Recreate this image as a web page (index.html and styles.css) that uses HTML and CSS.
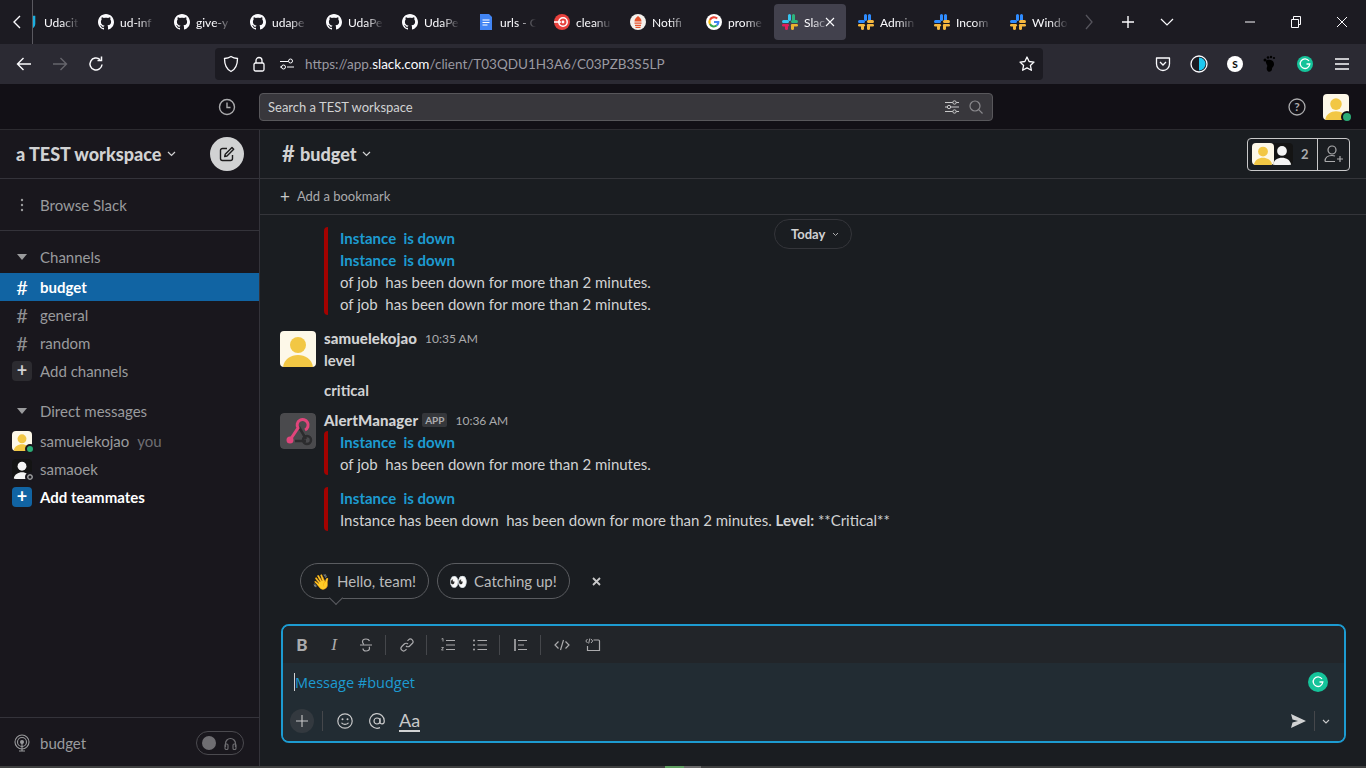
FILE: index.html
```html
<!DOCTYPE html>
<html>
<head>
  <title>Slack | budget | a TEST workspace</title>
  <link rel="stylesheet" href="styles.css">
</head>
<body>
  <svg class="defs" width="0" height="0">
    <defs>
      <symbol id="github" viewBox="0 0 16 16"><path fill="#fbfbfe" d="M8 0C3.6 0 0 3.6 0 8c0 3.5 2.3 6.5 5.5 7.6.4.1.5-.2.5-.4v-1.4c-2.2.5-2.7-1-2.7-1-.4-.9-.9-1.2-.9-1.2-.7-.5.1-.5.1-.5.8.1 1.2.8 1.2.8.7 1.2 1.9.9 2.3.7.1-.5.3-.9.5-1.1-1.8-.2-3.6-.9-3.6-4 0-.9.3-1.6.8-2.1-.1-.2-.4-1 .1-2.1 0 0 .7-.2 2.2.8.6-.2 1.3-.3 2-.3s1.4.1 2 .3c1.5-1 2.2-.8 2.2-.8.4 1.1.2 1.9.1 2.1.5.6.8 1.3.8 2.1 0 3.1-1.9 3.7-3.7 3.9.3.3.6.8.6 1.5v2.2c0 .2.1.5.6.4C13.7 14.5 16 11.5 16 8c0-4.4-3.6-8-8-8z"/></symbol>
      <symbol id="slack" viewBox="0 0 16 16">
        <rect x="6" y="0" width="3" height="7" rx="1.5" fill="#2f8cff"/>
        <rect x="0" y="6" width="7" height="3" rx="1.5" fill="#2f8cff"/>
        <rect x="10" y="0" width="3" height="7" rx="1.5" fill="#2f8cff"/>
        <rect x="9" y="6" width="7" height="3" rx="1.5" fill="#f4b740"/>
        <rect x="3" y="10" width="3" height="6" rx="1.5" fill="#f4b740"/>
        <rect x="0" y="10" width="7" height="2.6" rx="1.3" fill="#f4b740"/>
        <rect x="9" y="10" width="7" height="2.6" rx="1.3" fill="#f4b740"/>
        <rect x="9" y="10" width="3" height="6" rx="1.5" fill="#f4b740"/>
      </symbol>
      <symbol id="person" viewBox="0 0 36 36">
        <rect width="36" height="36" fill="#fdf8e8"/>
        <circle cx="18" cy="14" r="8" fill="#f2c744"/>
        <path d="M3 36c1-8 8-12 15-12s14 4 15 12z" fill="#f2c744"/>
      </symbol>
      <symbol id="ghost" viewBox="0 0 36 36">
        <rect width="36" height="36" fill="#141414"/>
        <circle cx="18" cy="13" r="8" fill="#f4f4f4"/>
        <path d="M3 36c1-8 8-12 15-12s14 4 15 12z" fill="#f4f4f4"/>
      </symbol>
    </defs>
  </svg>

  <header class="tabbar">
    <svg class="tb-back" width="10" height="16" viewBox="0 0 10 16"><path d="M8 2 2 8l6 6" fill="none" stroke="#fbfbfe" stroke-width="1.4"/></svg>
    <div class="tabs">
      <div class="tab tab-first"><svg class="fav" viewBox="0 0 16 16"><path d="M2 3h10v7c0 2-2 4-5 4s-5-2-5-4z" fill="none" stroke="#1cb0e0" stroke-width="2.6"/></svg><span class="tab-title">Udacit</span></div>
      <div class="tab"><svg class="fav"><use href="#github"/></svg><span class="tab-title">ud-inf</span></div>
      <div class="tab"><svg class="fav"><use href="#github"/></svg><span class="tab-title">give-y</span></div>
      <div class="tab"><svg class="fav"><use href="#github"/></svg><span class="tab-title">udape</span></div>
      <div class="tab"><svg class="fav"><use href="#github"/></svg><span class="tab-title">UdaPe</span></div>
      <div class="tab"><svg class="fav"><use href="#github"/></svg><span class="tab-title">UdaPe</span></div>
      <div class="tab"><svg class="fav" viewBox="0 0 16 16"><path d="M2 0h9l3 3v13H2z" fill="#4285f4"/><path d="M4.500 6h7M4.500 8.500h7M4.500 11h5" stroke="#fff" stroke-width="1.200"/></svg><span class="tab-title">urls - G</span></div>
      <div class="tab"><svg class="fav" viewBox="0 0 16 16"><circle cx="8" cy="8" r="8" fill="#e8413d"/><circle cx="9" cy="8" r="4.200" fill="none" stroke="#fff" stroke-width="1.500"/><circle cx="9" cy="8" r="1.400" fill="#fff"/><path d="M0 8h7" stroke="#fff" stroke-width="1.500"/></svg><span class="tab-title">cleanu</span></div>
      <div class="tab"><svg class="fav" viewBox="0 0 16 16"><circle cx="8" cy="8" r="8" fill="#f4f0ec"/><path d="M8 2c2 2 3.500 3 3.500 5.500H4.500C4.500 5 6 4 8 2zM4.500 8.500h7v1.200h-7zM5 10.700h6v1.200H5zM5.500 12.800h5V14h-5z" fill="#e6522c"/></svg><span class="tab-title">Notifi</span></div>
      <div class="tab"><svg class="fav" viewBox="0 0 16 16"><circle cx="8" cy="8" r="8" fill="#fff"/><path d="M8 4.200c1 0 1.800.4 2.400 1l1.500-1.500A5.600 5.600 0 0 0 3 5.300l1.800 1.400A3.400 3.400 0 0 1 8 4.200z" fill="#ea4335"/><path d="M13.400 8.100c0-.4 0-.8-.1-1.100H8v2.100h3a2.600 2.600 0 0 1-1.100 1.700l1.700 1.300c1.100-1 1.800-2.400 1.800-4z" fill="#4285f4"/><path d="M4.800 9.200 3 10.600a5.600 5.600 0 0 0 8.600 1.500l-1.700-1.300a3.400 3.400 0 0 1-5.100-1.600z" fill="#34a853"/><path d="M4.600 8c0-.3 0-.7.200-1L3 5.300a5.600 5.600 0 0 0 0 5.300l1.800-1.400c-.2-.4-.2-.8-.2-1.200z" fill="#fbbc05"/></svg><span class="tab-title">prome</span></div>
      <div class="tab tab-active">
        <svg class="fav" viewBox="0 0 16 16">
          <rect x="6" y="0" width="3" height="7" rx="1.500" fill="#36c5f0"/><rect x="0" y="6" width="7" height="3" rx="1.500" fill="#36c5f0"/>
          <rect x="10" y="0" width="3" height="7" rx="1.500" fill="#2eb67d"/><rect x="9" y="6" width="7" height="3" rx="1.500" fill="#2eb67d"/>
          <rect x="0" y="10" width="7" height="2.600" rx="1.300" fill="#e01e5a"/><rect x="3" y="10" width="3" height="6" rx="1.500" fill="#e01e5a"/>
          <rect x="9" y="10" width="7" height="2.600" rx="1.300" fill="#ecb22e"/><rect x="9" y="10" width="3" height="6" rx="1.500" fill="#ecb22e"/>
        </svg>
        <span class="tab-title tab-title-short">Slac</span>
        <svg class="tab-close" width="10" height="10" viewBox="0 0 10 10"><path d="M1 1l8 8M9 1 1 9" stroke="#fbfbfe" stroke-width="1.100"/></svg>
      </div>
      <div class="tab"><svg class="fav"><use href="#slack"/></svg><span class="tab-title">Admin</span></div>
      <div class="tab"><svg class="fav"><use href="#slack"/></svg><span class="tab-title">Incom</span></div>
      <div class="tab"><svg class="fav"><use href="#slack"/></svg><span class="tab-title">Windo</span></div>
    </div>
    <svg class="tb-more" width="10" height="16" viewBox="0 0 10 16"><path d="M2 1l6 7-6 7" fill="none" stroke="#55545c" stroke-width="1.300"/></svg>
    <svg class="tb-new" width="14" height="14" viewBox="0 0 14 14"><path d="M7 1v12M1 7h12" stroke="#fbfbfe" stroke-width="1.400"/></svg>
    <svg class="tb-list" width="14" height="8" viewBox="0 0 14 8"><path d="M1 1l6 6 6-6" fill="none" stroke="#fbfbfe" stroke-width="1.200"/></svg>
    <div class="win-btns">
      <svg width="10" height="2" viewBox="0 0 10 2"><path d="M0 1h10" stroke="#fbfbfe"/></svg>
      <svg width="10" height="12" viewBox="0 0 10 12"><path d="M.5 3.500h7v8h-7zM2.500 3.500V.5h7v8h-2" fill="none" stroke="#fbfbfe"/></svg>
      <svg width="10" height="10" viewBox="0 0 10 10"><path d="M0 0l10 10M10 0 0 10" stroke="#fbfbfe"/></svg>
    </div>
  </header>

  <nav class="navbar">
    <svg class="nav-btn" width="16" height="14" viewBox="0 0 16 14"><path d="M15 7H2M7.500 1 1.500 7l6 6" fill="none" stroke="#fbfbfe" stroke-width="1.400"/></svg>
    <svg class="nav-btn" width="16" height="14" viewBox="0 0 16 14"><path d="M1 7h13M8.500 1l6 6-6 6" fill="none" stroke="#66656c" stroke-width="1.400"/></svg>
    <svg class="nav-btn" width="16" height="16" viewBox="0 0 16 16"><path d="M14 8.500A6 6 0 1 1 12 3.500M13.500 .5v4h-4" fill="none" stroke="#fbfbfe" stroke-width="1.500"/></svg>
    <div class="urlbar">
      <svg width="16" height="18" viewBox="0 0 16 18"><path d="M8 1.500c2 1.300 4 1.800 6.500 2 0 6-1.500 10.500-6.500 13-5-2.500-6.500-7-6.500-13 2.500-.2 4.500-.7 6.500-2z" fill="none" stroke="#fbfbfe" stroke-width="1.300"/></svg>
      <svg width="12" height="16" viewBox="0 0 12 16"><path d="M3 7V4.500a3 3 0 0 1 6 0V7" fill="none" stroke="#fbfbfe" stroke-width="1.300"/><rect x="1" y="7" width="10" height="8" rx="1.500" fill="none" stroke="#fbfbfe" stroke-width="1.300"/></svg>
      <svg width="14" height="12" viewBox="0 0 14 12"><path d="M0 3.500h8M0 9h2M7 9h7" stroke="#fbfbfe"/><circle cx="10.500" cy="3" r="2" fill="none" stroke="#fbfbfe"/><circle cx="3.500" cy="9" r="2" fill="none" stroke="#fbfbfe"/></svg>
      <span class="url">https://app.<b>slack.com</b>/client/T03QDU1H3A6/C03PZB3S5LP</span>
      <svg class="url-star" width="16" height="16" viewBox="0 0 16 16"><path d="M8 1l2.100 4.500 4.900.6-3.600 3.300 1 4.900L8 11.900l-4.400 2.400 1-4.900L1 6.100l4.900-.6z" fill="none" stroke="#fbfbfe" stroke-width="1.300" stroke-linejoin="round"/></svg>
    </div>
    <div class="ext-icons">
      <svg width="16" height="16" viewBox="0 0 16 16"><path d="M1.500 2h13v6a6.500 6.500 0 0 1-13 0z" fill="none" stroke="#fbfbfe" stroke-width="1.300" stroke-linejoin="round"/><path d="M5 6l3 3 3-3" fill="none" stroke="#fbfbfe" stroke-width="1.300"/></svg>
      <svg width="18" height="18" viewBox="0 0 18 18"><circle cx="9" cy="9" r="8" fill="#1c1b22" stroke="#fbfbfe" stroke-width="1.300"/><path d="M9 2.500a6.500 6.500 0 0 1 0 13z" fill="#1ec8f0"/></svg>
      <span class="ext-s">S</span>
      <svg width="16" height="18" viewBox="0 0 16 18"><path d="M5 5c3-1 7 0 7 4 0 3-2 3-2 5 0 3-4 4-5 1s1-3 0-5-2-4 0-5z" fill="#000"/><circle cx="3" cy="5" r="1.500" fill="#000"/><circle cx="6" cy="2.500" r="1.300" fill="#000"/><circle cx="9" cy="2" r="1.200" fill="#000"/><circle cx="12" cy="3" r="1.100" fill="#000"/></svg>
      <span class="gram gram-sm"><svg width="12" height="12" viewBox="0 0 12 12"><path d="M10 3A4.800 4.800 0 1 0 10.800 6H7.500" fill="none" stroke="#fff" stroke-width="1.300"/></svg></span>
      <svg class="ext-menu" width="14" height="12" viewBox="0 0 14 12"><path d="M0 1h14M0 6h14M0 11h14" stroke="#fbfbfe" stroke-width="1.300"/></svg>
    </div>
  </nav>

  <div class="slack-top">
    <svg class="history" width="18" height="18" viewBox="0 0 18 18"><circle cx="9" cy="9" r="7.500" fill="none" stroke="#ababad" stroke-width="1.400"/><path d="M9 4.500V9.500h3.500" fill="none" stroke="#ababad" stroke-width="1.400"/></svg>
    <div class="search">
      <span class="search-text">Search a TEST workspace</span>
      <svg width="14" height="14" viewBox="0 0 14 14"><path d="M0 2.500h14M0 7h14M0 11.500h14" stroke="#c8c8c9" stroke-width="1.100"/><circle cx="9.500" cy="2.500" r="1.700" fill="#3a393e" stroke="#c8c8c9"/><circle cx="4" cy="7" r="1.700" fill="#3a393e" stroke="#c8c8c9"/><circle cx="9.500" cy="11.500" r="1.700" fill="#3a393e" stroke="#c8c8c9"/></svg>
      <svg width="14" height="14" viewBox="0 0 14 14"><circle cx="6" cy="6" r="5" fill="none" stroke="#8a898d" stroke-width="1.200"/><path d="M9.700 9.700 13.500 13.500" stroke="#8a898d" stroke-width="1.200"/></svg>
    </div>
    <svg class="help" width="18" height="18" viewBox="0 0 18 18"><circle cx="9" cy="9" r="8" fill="none" stroke="#ababad" stroke-width="1.300"/><text x="9" y="13" text-anchor="middle" class="help-q">?</text></svg>
    <div class="me">
      <svg class="avatar-me"><use href="#person"/></svg>
      <span class="me-dot"></span>
    </div>
  </div>

  <div class="app">
    <aside class="sidebar">
      <div class="side-head">
        <span class="workspace">a TEST workspace</span>
        <svg class="chev" width="9" height="6" viewBox="0 0 9 6"><path d="M1 1l3.500 3.500L8 1" fill="none" stroke="#d1d2d3" stroke-width="1.200"/></svg>
        <span class="compose"><svg width="16" height="16" viewBox="0 0 16 16"><path d="M8 2.500H3.500a2 2 0 0 0-2 2v8a2 2 0 0 0 2 2h8a2 2 0 0 0 2-2V9" fill="none" stroke="#1d1c1d" stroke-width="1.400"/><path d="M13 1.500l1.700 1.700L8 10l-2.300.5.500-2.200z" fill="none" stroke="#1d1c1d" stroke-width="1.400" stroke-linejoin="round"/></svg></span>
      </div>
      <div class="side-browse">
        <div class="row"><span class="row-ico"><svg width="4" height="14" viewBox="0 0 4 14"><circle cx="2" cy="2" r="1.200" fill="#9a9b9d"/><circle cx="2" cy="7" r="1.200" fill="#9a9b9d"/><circle cx="2" cy="12" r="1.200" fill="#9a9b9d"/></svg></span>Browse Slack</div>
      </div>
      <div class="side-list">
        <div class="row row-head"><span class="row-ico"><i class="caret"></i></span>Channels</div>
        <div class="row row-active"><span class="row-ico hash">#</span>budget</div>
        <div class="row"><span class="row-ico hash">#</span>general</div>
        <div class="row"><span class="row-ico hash">#</span>random</div>
        <div class="row"><span class="row-ico"><span class="add-box">+</span></span>Add channels</div>
        <div class="row row-head row-section"><span class="row-ico"><i class="caret"></i></span>Direct messages</div>
        <div class="row"><span class="row-ico"><span class="dm-pic"><svg><use href="#person"/></svg><span class="dm-on"></span></span></span>samuelekojao<span class="you">you</span></div>
        <div class="row"><span class="row-ico"><span class="dm-pic"><svg><use href="#ghost"/></svg><span class="dm-off"></span></span></span>samaoek</div>
        <div class="row row-strong"><span class="row-ico"><span class="add-box add-blue">+</span></span>Add teammates</div>
      </div>
      <div class="side-foot">
        <svg width="16" height="18" viewBox="0 0 16 18"><circle cx="8" cy="8" r="7" fill="none" stroke="#9a9b9d" stroke-width="1.100"/><circle cx="8" cy="8" r="4.500" fill="none" stroke="#9a9b9d" stroke-width="1.100"/><circle cx="8" cy="8" r="2" fill="#9a9b9d"/><path d="M8 9v8M5 17h6" stroke="#9a9b9d" stroke-width="1.100"/></svg>
        <span class="foot-name">budget</span>
        <span class="huddle"><i class="huddle-dot"></i><svg width="13" height="13" viewBox="0 0 13 13"><path d="M1.500 10V6.500a5 5 0 0 1 10 0V10" fill="none" stroke="#6f6e72" stroke-width="1.200"/><rect x="1" y="7" width="3" height="5.500" rx="1.200" fill="none" stroke="#6f6e72" stroke-width="1.100"/><rect x="9" y="7" width="3" height="5.500" rx="1.200" fill="none" stroke="#6f6e72" stroke-width="1.100"/></svg></span>
      </div>
    </aside>

    <main class="main">
      <div class="chan-head">
        <h1 class="chan-name"><span class="chan-hash">#</span>budget</h1>
        <svg class="chev" width="9" height="6" viewBox="0 0 9 6"><path d="M1 1l3.500 3.500L8 1" fill="none" stroke="#d1d2d3" stroke-width="1.200"/></svg>
        <div class="members">
          <div class="members-left">
            <svg class="mem-pic mem-a"><use href="#person"/></svg>
            <svg class="mem-pic mem-b"><use href="#ghost"/></svg>
            <span class="mem-count">2</span>
          </div>
          <div class="members-add"><svg width="20" height="18" viewBox="0 0 20 18"><circle cx="8" cy="5" r="4" fill="none" stroke="#ababad" stroke-width="1.200"/><path d="M1 16.500c0-4 3-6 7-6 1 0 2 .1 3 .5M1 16.500h10M16 11v6M13 14h6" fill="none" stroke="#ababad" stroke-width="1.200"/></svg></div>
        </div>
      </div>
      <div class="bookmarks"><span class="bm-plus">+</span>Add a bookmark</div>

      <div class="feed">
        <button class="today">Today <svg width="7" height="5" viewBox="0 0 7 5"><path d="M1 1l2.500 2.500L6 1" fill="none" stroke="#ababad"/></svg></button>
        <div class="attach attach-first">
          <a class="attach-title">Instance&nbsp; is down</a>
          <a class="attach-title">Instance&nbsp; is down</a>
          <p>of job&nbsp; has been down for more than 2 minutes.</p>
          <p>of job&nbsp; has been down for more than 2 minutes.</p>
        </div>

        <div class="msg msg-user">
          <svg class="msg-pic"><use href="#person"/></svg>
          <div class="msg-body">
            <div class="msg-meta"><span class="msg-name">samuelekojao</span><span class="msg-time">10:35 AM</span></div>
            <p class="msg-text">level</p>
            <p class="msg-text msg-gap">critical</p>
          </div>
        </div>

        <div class="msg msg-app">
          <svg class="msg-pic" viewBox="0 0 36 36">
            <rect width="36" height="36" rx="4" fill="#4a4a4d"/>
            <path d="M15 28h11M19 14l7 12" fill="none" stroke="#2c2c2e" stroke-width="2.500"/>
            <circle cx="27" cy="27" r="4" fill="none" stroke="#2c2c2e" stroke-width="2.500"/>
            <path d="M10 27 18 15a5.500 5.500 0 1 1 7 2" fill="none" stroke="#e0457b" stroke-width="3"/>
            <circle cx="10" cy="27" r="3.500" fill="#e0457b"/>
          </svg>
          <div class="msg-body">
            <div class="msg-meta"><span class="msg-name">AlertManager</span><span class="app-tag">APP</span><span class="msg-time">10:36 AM</span></div>
            <div class="attach">
              <a class="attach-title">Instance&nbsp; is down</a>
              <p>of job&nbsp; has been down for more than 2 minutes.</p>
            </div>
            <div class="attach attach-next">
              <a class="attach-title">Instance&nbsp; is down</a>
              <p>Instance has been down&nbsp; has been down for more than 2 minutes. <b>Level:</b> **Critical**</p>
            </div>
          </div>
        </div>

        <div class="chips">
          <span class="chip chip-tail"><span class="chip-emoji">👋</span>Hello, team!</span>
          <span class="chip"><span class="chip-emoji">👀</span>Catching up!</span>
          <svg class="chip-close" width="9" height="9" viewBox="0 0 9 9"><path d="M1 1l7 7M8 1 1 8" stroke="#c8c8c9" stroke-width="1.800"/></svg>
        </div>
      </div>

      <div class="composer">
        <div class="fmt-bar">
          <b class="fmt fmt-b">B</b>
          <i class="fmt fmt-i">I</i>
          <svg class="fmt" width="14" height="14" viewBox="0 0 14 14"><path d="M1 7h12M10.500 3C10 1.500 8.500 1 7 1 5 1 3.500 2 3.500 3.800c0 1 .5 1.800 1.300 2.400M4 10.500C4 12 5.500 13 7 13c2 0 3.500-1 3.500-2.700 0-.6-.1-1-.4-1.500" fill="none" stroke="#ababad" stroke-width="1.200"/></svg>
          <span class="fmt-sep"></span>
          <svg class="fmt" width="14" height="14" viewBox="0 0 14 14"><path d="M6 8a2.600 2.600 0 0 0 3.700 0l2.500-2.500A2.600 2.600 0 0 0 8.500 1.800L7.500 2.800M8 6a2.600 2.600 0 0 0-3.700 0L1.800 8.500a2.600 2.600 0 0 0 3.700 3.700l1-1" fill="none" stroke="#ababad" stroke-width="1.200"/></svg>
          <span class="fmt-sep"></span>
          <svg class="fmt" width="14" height="14" viewBox="0 0 14 14"><path d="M5 2.500h9M5 7h9M5 11.500h9" stroke="#ababad" stroke-width="1.200"/><path d="M.5 1 2 .5v3M.5 9.500h2L.5 12h2" fill="none" stroke="#ababad" stroke-width=".9"/></svg>
          <svg class="fmt" width="14" height="14" viewBox="0 0 14 14"><path d="M4.500 2.500H14M4.500 7H14M4.500 11.500H14" stroke="#ababad" stroke-width="1.200"/><circle cx="1" cy="2.500" r="1" fill="#ababad"/><circle cx="1" cy="7" r="1" fill="#ababad"/><circle cx="1" cy="11.500" r="1" fill="#ababad"/></svg>
          <span class="fmt-sep"></span>
          <svg class="fmt" width="14" height="14" viewBox="0 0 14 14"><path d="M1 1v12" stroke="#ababad" stroke-width="1.600"/><path d="M4 2.500h9M4 7h6M4 11.500h9" stroke="#ababad" stroke-width="1.200"/></svg>
          <span class="fmt-sep"></span>
          <svg class="fmt" width="16" height="14" viewBox="0 0 16 14"><path d="M4.500 3.500 1 7l3.500 3.500M11.500 3.500 15 7l-3.500 3.500M9.500 2l-3 10" fill="none" stroke="#ababad" stroke-width="1.200"/></svg>
          <svg class="fmt" width="16" height="14" viewBox="0 0 16 14"><path d="M8.500 2h5a1 1 0 0 1 1 1v9.500h-12V8" fill="none" stroke="#ababad" stroke-width="1.200"/><path d="M2.500 1 .8 3l1.700 2M6 1l1.700 2L6 5M4.800 .5 3.700 5.500" fill="none" stroke="#ababad" stroke-width="1"/></svg>
        </div>
        <div class="input-area">
          <div class="input-line">
            <span class="caret-bar"></span>
            <span class="placeholder">Message #budget</span>
            <span class="gram"><svg width="12" height="12" viewBox="0 0 12 12"><path d="M10 3A4.800 4.800 0 1 0 10.800 6H7.500" fill="none" stroke="#fff" stroke-width="1.300"/></svg></span>
          </div>
          <div class="input-tools">
            <span class="plus-btn"><svg width="12" height="12" viewBox="0 0 12 12"><path d="M6 0v12M0 6h12" stroke="#c8c8c9" stroke-width="1.100"/></svg></span>
            <span class="tool-sep"></span>
            <svg class="tool" width="16" height="16" viewBox="0 0 16 16"><circle cx="8" cy="8" r="7.200" fill="none" stroke="#c8c8c9" stroke-width="1.200"/><circle cx="5.500" cy="6.200" r="1" fill="#c8c8c9"/><circle cx="10.500" cy="6.200" r="1" fill="#c8c8c9"/><path d="M4.500 9.800c1 2 6 2 7 0" fill="none" stroke="#c8c8c9" stroke-width="1.200"/></svg>
            <svg class="tool" width="16" height="16" viewBox="0 0 16 16"><circle cx="8" cy="8" r="3" fill="none" stroke="#c8c8c9" stroke-width="1.200"/><path d="M11 5v4.200c0 2.500 4.300 2.500 4.300-1.200A7.300 7.300 0 1 0 11 14.600" fill="none" stroke="#c8c8c9" stroke-width="1.200"/></svg>
            <span class="aa">Aa</span>
            <svg class="send" width="15" height="14" viewBox="0 0 15 14"><path d="M0 0l15 7-15 7 1.500-5.500L7 7 1.500 5.500z" fill="#d1d2d3"/></svg>
            <span class="send-sep"></span>
            <svg class="send-more" width="8" height="5" viewBox="0 0 8 5"><path d="M1 1l3 3 3-3" fill="none" stroke="#c8c8c9" stroke-width="1.100"/></svg>
          </div>
        </div>
      </div>
    </main>
  </div>
  <div class="screen-edge"><span class="edge-mark"></span></div>
</body>
</html>
```

FILE: styles.css
```css
* {
  box-sizing: border-box;
}

html, body {
  margin: 0;
  height: 768px;
  overflow: hidden;
}

body {
  display: flex;
  flex-direction: column;
  background-color: #1a1d21;
  color: #d1d2d3;
  font-family: Lato, sans-serif;
  font-size: 15px;
}

p {
  margin: 0;
}

svg {
  display: block;
  flex-shrink: 0;
}

.defs {
  position: absolute;
}

/* browser chrome */
.tabbar {
  display: flex;
  align-items: center;
  height: 44px;
  background-color: #1c1b22;
  flex-shrink: 0;
}

.tb-back {
  margin: 0 10px 0 12px;
}

.tabs {
  display: flex;
  width: 1046px;
  height: 44px;
  padding-top: 4px;
  border-left: 1px solid #5a5960;
  overflow: hidden;
  flex-shrink: 0;
}

.tab {
  display: flex;
  align-items: center;
  gap: 6px;
  width: 72px;
  height: 36px;
  margin-right: 4px;
  padding-left: 8px;
  border-radius: 4px;
  flex-shrink: 0;
  overflow: hidden;
}

.tab-first {
  margin-left: -19px;
}

.tab-active {
  position: relative;
  background-color: #42414d;
}

.fav {
  width: 16px;
  height: 16px;
  flex-shrink: 0;
}

.tab-title {
  font-size: 12px;
  color: #fbfbfe;
  white-space: nowrap;
  -webkit-mask-image: linear-gradient(to right, #000 18px, transparent 36px);
  mask-image: linear-gradient(to right, #000 18px, transparent 36px);
}

.tab-title-short {
  -webkit-mask-image: linear-gradient(to right, #000 8px, transparent 26px);
  mask-image: linear-gradient(to right, #000 8px, transparent 26px);
}

.tab-close {
  position: absolute;
  right: 11px;
  top: 13px;
}

.tb-more {
  margin-left: 6px;
}

.tb-new {
  margin-left: 27px;
}

.tb-list {
  margin-left: 25px;
}

.win-btns {
  display: flex;
  align-items: center;
  gap: 36px;
  margin-left: 71px;
}

.navbar {
  display: flex;
  align-items: center;
  height: 40px;
  padding-left: 16px;
  background-color: #2b2a33;
  flex-shrink: 0;
}

.nav-btn {
  margin-right: 20px;
}

.urlbar {
  display: flex;
  align-items: center;
  width: 828px;
  height: 32px;
  margin-left: 91px;
  padding: 0 8px;
  border-radius: 4px;
  background-color: #1c1b22;
  flex-shrink: 0;
}

.urlbar svg:nth-child(2) {
  margin-left: 14px;
}

.urlbar svg:nth-child(3) {
  margin-left: 15px;
}

.url {
  margin-left: 11px;
  font-size: 13.5px;
  color: #9a99a1;
  white-space: nowrap;
}

.url b {
  font-weight: 400;
  color: #fbfbfe;
}

.url-star {
  margin-left: auto;
}

.ext-icons {
  display: flex;
  align-items: center;
  gap: 19px;
  margin-left: 112px;
}

.ext-menu {
  margin-left: 3px;
}

.ext-s {
  width: 16px;
  height: 16px;
  border-radius: 50%;
  background-color: #fff;
  color: #111;
  font-size: 10px;
  font-weight: 900;
  line-height: 16px;
  text-align: center;
}

.gram {
  display: flex;
  align-items: center;
  justify-content: center;
  width: 20px;
  height: 20px;
  border-radius: 50%;
  background-color: #15c39a;
  margin-left: auto;
}

.gram-sm {
  width: 16px;
  height: 16px;
  margin-left: 0;
}

/* slack top strip */
.slack-top {
  display: flex;
  align-items: center;
  height: 46px;
  background-color: #121016;
  border-bottom: 1px solid #2c2b30;
  flex-shrink: 0;
}

.history {
  margin: 0 23px 0 218px;
}

.search {
  display: flex;
  align-items: center;
  gap: 10px;
  width: 734px;
  height: 28px;
  padding: 0 9px 0 8px;
  background-color: #38373c;
  border: 1px solid #58575b;
  border-radius: 4px;
}

.search-text {
  flex: 1;
  font-size: 13px;
  color: #d1d2d3;
}

.help {
  margin-left: 295px;
}

.help-q {
  font-family: Lato, sans-serif;
  font-size: 12px;
  font-weight: 700;
  fill: #ababad;
}

.me {
  position: relative;
  width: 26px;
  height: 26px;
  margin-left: 17px;
}

.avatar-me {
  width: 26px;
  height: 26px;
  border-radius: 4px;
}

.me-dot {
  position: absolute;
  right: -4px;
  bottom: -3px;
  width: 12px;
  height: 12px;
  border-radius: 50%;
  background-color: #2bac76;
  border: 2px solid #121016;
}

/* app */
.app {
  display: flex;
  flex: 1;
  min-height: 0;
}

.sidebar {
  display: flex;
  flex-direction: column;
  width: 260px;
  flex-shrink: 0;
  background-color: #19171d;
  border-right: 1px solid #34333a;
}

.side-head {
  display: flex;
  align-items: center;
  height: 49px;
  padding: 0 15px 0 16px;
  border-bottom: 1px solid #34333a;
}

.workspace {
  font-size: 18px;
  font-weight: 900;
  margin-right: 6px;
}

.compose {
  display: flex;
  align-items: center;
  justify-content: center;
  width: 34px;
  height: 34px;
  margin-left: auto;
  border-radius: 50%;
  background-color: #d1d2d3;
}

.side-browse {
  padding: 12px 0 11px;
  border-bottom: 1px solid #34333a;
}

.side-list {
  flex: 1;
  padding-top: 12px;
}

.row {
  display: flex;
  align-items: center;
  height: 28px;
  padding-left: 12px;
  color: #9a9b9d;
}

.row-head {
  margin-bottom: 2px;
}

.row-ico {
  display: flex;
  align-items: center;
  justify-content: center;
  width: 20px;
  margin-right: 8px;
}

.hash {
  font-size: 20px;
  font-weight: 400;
  color: #8f9092;
}

.caret {
  width: 0;
  height: 0;
  border-left: 5px solid transparent;
  border-right: 5px solid transparent;
  border-top: 6px solid #9a9b9d;
}

.row-active {
  background-color: #1164a3;
  color: #fff;
  font-weight: 700;
}

.row-active .hash {
  color: #fff;
}

.row-section {
  margin-top: 12px;
}

.row-strong {
  color: #fff;
  font-weight: 700;
}

.add-box {
  width: 20px;
  height: 20px;
  border-radius: 4px;
  background-color: #2c2b30;
  color: #d1d2d3;
  font-size: 18px;
  font-weight: 700;
  line-height: 19px;
  text-align: center;
}

.add-blue {
  background-color: #1164a3;
  color: #fff;
}

.dm-pic {
  position: relative;
  width: 20px;
  height: 20px;
}

.dm-pic svg {
  width: 20px;
  height: 20px;
  border-radius: 4px;
}

.dm-on,
.dm-off {
  position: absolute;
  right: -3px;
  bottom: -3px;
  width: 10px;
  height: 10px;
  border-radius: 50%;
  background-color: #2bac76;
  border: 2px solid #19171d;
}

.dm-off {
  background-color: #19171d;
  box-shadow: inset 0 0 0 1.5px #9a9b9d;
}

.you {
  margin-left: 8px;
  color: #6f6e72;
}

.side-foot {
  display: flex;
  align-items: center;
  height: 51px;
  padding: 0 15px 0 14px;
  border-top: 1px solid #34333a;
}

.foot-name {
  margin-left: 10px;
  color: #9a9b9d;
}

.huddle {
  display: flex;
  align-items: center;
  justify-content: space-between;
  width: 48px;
  height: 24px;
  margin-left: auto;
  padding: 0 6px 0 5px;
  border: 1px solid #4b4a4f;
  border-radius: 12px;
}

.huddle-dot {
  width: 14px;
  height: 14px;
  border-radius: 50%;
  background-color: #6f6e72;
}

/* main column */
.main {
  display: flex;
  flex-direction: column;
  flex: 1;
  min-width: 0;
}

.chan-head {
  display: flex;
  align-items: center;
  height: 49px;
  padding: 0 16px 0 22px;
  border-bottom: 1px solid #34353a;
}

.chan-name {
  display: flex;
  align-items: center;
  margin: 0 5px 0 0;
  font-size: 18px;
  font-weight: 900;
}

.chan-hash {
  width: 18px;
  font-size: 22px;
  font-weight: 700;
  line-height: 1;
}

.members {
  display: flex;
  width: 103px;
  height: 33px;
  margin-left: auto;
  border: 1px solid #c8c8c9;
  border-radius: 4px;
}

.members-left {
  display: flex;
  align-items: center;
  width: 69px;
  padding-left: 4px;
}

.mem-pic {
  width: 22px;
  height: 22px;
  border-radius: 4px;
}

.mem-a {
  position: relative;
  z-index: 1;
}

.mem-b {
  margin-left: -3px;
}

.mem-count {
  margin-left: 8px;
  font-size: 13px;
  font-weight: 700;
  color: #ababad;
}

.members-add {
  display: flex;
  align-items: center;
  justify-content: center;
  flex: 1;
  border-left: 1px solid #c8c8c9;
}

.bookmarks {
  display: flex;
  align-items: center;
  height: 36px;
  padding: 0 0 1px 20px;
  font-size: 13px;
  color: #ababad;
  border-bottom: 1px solid #34353a;
}

.bm-plus {
  margin-right: 7px;
  font-size: 17px;
  line-height: 1;
  color: #c8c8c9;
}

.feed {
  position: relative;
  flex: 1;
  min-height: 0;
  padding: 12px 0 0 20px;
}

.today {
  position: absolute;
  top: 4px;
  left: 514px;
  display: flex;
  align-items: center;
  gap: 7px;
  width: 78px;
  height: 30px;
  padding: 0 0 0 16px;
  background-color: #1a1d21;
  border: 1px solid #34353a;
  border-radius: 15px;
  color: #d1d2d3;
  font-family: Lato, sans-serif;
  font-size: 13px;
  font-weight: 700;
}

.attach {
  padding-left: 12px;
  border-left: 4px solid #a30200;
  border-radius: 4px 0 0 4px;
  line-height: 22px;
}

.attach-first {
  margin-left: 44px;
}

.attach-next {
  margin-top: 12px;
}

.attach-title {
  display: block;
  color: #1d9bd1;
  font-weight: 700;
}

.msg {
  display: flex;
  gap: 8px;
}

.msg-user {
  margin-top: 16px;
}

.msg-app {
  margin-top: 12px;
}

.msg-pic {
  width: 36px;
  height: 36px;
  border-radius: 4px;
}

.msg-body {
  flex: 1;
  min-width: 0;
}

.msg-meta {
  display: flex;
  align-items: center;
  height: 14px;
  margin-bottom: 4px;
}

.msg-name {
  font-weight: 900;
  letter-spacing: .08px;
}

.msg-time {
  margin-left: 8px;
  font-size: 12px;
  color: #ababad;
}

.app-tag {
  margin-left: 4px;
  padding: 0 3px;
  border-radius: 2px;
  background-color: #35373b;
  color: #ababad;
  font-size: 10px;
  font-weight: 700;
  line-height: 14px;
}

.msg-text {
  font-weight: 700;
  line-height: 22px;
}

.msg-gap {
  margin-top: 8px;
}

.chips {
  display: flex;
  align-items: center;
  gap: 8px;
  margin: 32px 0 0 20px;
}

.chip {
  position: relative;
  display: flex;
  align-items: center;
  height: 36px;
  padding: 0 12px 0 11px;
  border: 1px solid #5a5c60;
  border-radius: 18px;
  color: #b9babb;
  white-space: nowrap;
}

.chip-tail::after {
  content: "";
  position: absolute;
  left: 30px;
  bottom: -5px;
  width: 9px;
  height: 9px;
  background-color: #1a1d21;
  border-right: 1px solid #5a5c60;
  border-bottom: 1px solid #5a5c60;
  transform: rotate(45deg);
}

.chip-emoji {
  width: 17px;
  margin-right: 8px;
  font-size: 15px;
  line-height: 1;
}

.chip-close {
  margin-left: 14px;
}

.composer {
  display: flex;
  flex-direction: column;
  height: 119px;
  margin: 0 20px 25px 21px;
  border: 2px solid #1d9bd1;
  border-radius: 8px;
  overflow: hidden;
  flex-shrink: 0;
}

.fmt-bar {
  display: flex;
  align-items: center;
  height: 37px;
  padding-left: 12px;
  background-color: #222529;
  flex-shrink: 0;
}

.fmt {
  width: 14px;
  margin-right: 18px;
  color: #ababad;
  text-align: center;
}

.fmt-b {
  font-size: 17px;
  font-weight: 900;
}

.fmt-i {
  font-family: "Liberation Serif", serif;
  font-size: 17px;
}

svg.fmt[width="16"] {
  width: 16px;
  margin: 0 16px 0 -1px;
}

.fmt-sep {
  width: 1px;
  height: 20px;
  margin: 0 14px 0 -6px;
  background-color: #45474b;
}

.input-area {
  display: flex;
  flex-direction: column;
  flex: 1;
  padding: 0 10px 0 6px;
  background-color: #222c33;
}

.input-line {
  display: flex;
  align-items: center;
  height: 38px;
  padding: 0 6px 0 5px;
}

.caret-bar {
  width: 1px;
  height: 18px;
  background-color: #d1d2d3;
}

.placeholder {
  font-family: "Open Sans", sans-serif;
  font-size: 14.5px;
  color: #1d9bd1;
}

.input-tools {
  display: flex;
  align-items: center;
  flex: 1;
}

.plus-btn {
  display: flex;
  align-items: center;
  justify-content: center;
  width: 24px;
  height: 24px;
  margin-left: 1px;
  border-radius: 50%;
  background-color: #33393f;
}

.tool-sep {
  width: 1px;
  height: 20px;
  margin: 0 14px 0 8px;
  background-color: #45474b;
}

.tool {
  margin-right: 16px;
}

.aa {
  margin-left: -2px;
  font-size: 18px;
  line-height: 20px;
  color: #c8c8c9;
  border-bottom: 2px solid #d1d2d3;
}

.send {
  margin-left: auto;
}

.send-sep {
  width: 1px;
  height: 20px;
  margin: 0 7px 0 8px;
  background-color: #45474b;
}

.send-more {
  margin-right: 4px;
}

.screen-edge {
  position: absolute;
  left: 0;
  right: 0;
  top: 766px;
  height: 2px;
  background-color: #3f4040;
}

.edge-mark {
  position: absolute;
  left: 665px;
  width: 36px;
  height: 2px;
  background: linear-gradient(to right, #5f9e60 19px, #6b6b6b 19px);
}
```
